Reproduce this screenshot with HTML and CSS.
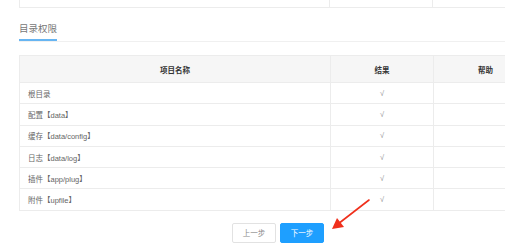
FILE: index.html
```html
<!DOCTYPE html>
<html lang="zh">
<head>
<meta charset="utf-8">
<link rel="stylesheet" href="styles.css">
</head>
<body>
<div class="viewport">
<div class="page">
  <div class="prev-table">
    <div class="pc c1"></div><div class="pc c2"></div><div class="pc c3"></div>
  </div>
  <div class="tabs">
    <span class="tab active">目录权限</span>
  </div>
  <table class="grid">
    <colgroup><col class="w1"><col class="w2"><col class="w3"></colgroup>
    <thead>
      <tr><th>项目名称</th><th>结果</th><th>帮助</th></tr>
    </thead>
    <tbody>
      <tr><td>根目录</td><td class="ok">√</td><td></td></tr>
      <tr><td>配置【data】</td><td class="ok">√</td><td></td></tr>
      <tr><td>缓存【data/config】</td><td class="ok">√</td><td></td></tr>
      <tr><td>日志【data/log】</td><td class="ok">√</td><td></td></tr>
      <tr><td>插件【app/plug】</td><td class="ok">√</td><td></td></tr>
      <tr><td>附件【upfile】</td><td class="ok">√</td><td></td></tr>
    </tbody>
  </table>
  <div class="actions">
    <button class="btn btn-plain">上一步</button>
    <button class="btn btn-primary">下一步</button>
  </div>
</div>
</div>
<svg class="arrow" width="50" height="40" viewBox="0 0 50 40">
  <line x1="41" y1="3" x2="10" y2="27" stroke="#f0301c" stroke-width="1.6" stroke-linecap="round"/>
  <polygon points="4,32 9,21 16,30" fill="#f0301c"/>
</svg>
</body>
</html>
```
FILE: styles.css
```css
html, body {
  margin: 0;
  padding: 0;
  background: #fff;
}
body {
  font-family: "Liberation Sans", "Noto Sans CJK SC", sans-serif;
  color: #666;
  position: relative;
  width: 505px;
  height: 252px;
  overflow: hidden;
}
.viewport {
  width: 505px;
  height: 252px;
  overflow: hidden;
}
.page {
  width: 518px;
  padding-left: 19px;
}
.prev-table {
  display: flex;
  height: 7px;
  border-bottom: 1px solid #ececec;
}
.pc { border-left: 1px solid #ececec; }
.c1 { width: 310px; }
.c2 { width: 102px; }
.c3 { width: 103px; border-right: 1px solid #ececec; }
.tabs {
  display: flex;
  margin-top: 15px;
  border-bottom: 1px solid #f0f0f0;
  height: 18px;
}
.tab {
  font-size: 9.5px;
  line-height: 12px;
  height: 16px;
  color: #777;
}
.tab.active {
  border-bottom: 2px solid #67b5f2;
}
.grid {
  margin-top: 13px;
  width: 518px;
  border-collapse: collapse;
  table-layout: fixed;
  font-size: 7.5px;
}
.w1 { width: 311px; }
.w2 { width: 103px; }
.w3 { width: 104px; }
.grid th, .grid td {
  border: 1px solid #ececec;
  padding: 0 8px;
}
.grid th {
  background: #f6f6f6;
  color: #333;
  font-weight: bold;
  height: 26px;
  text-align: center;
}
.grid td {
  height: 20.3px;
  color: #666;
}
.grid td.ok {
  text-align: center;
  color: #999;
}
.actions {
  display: flex;
  justify-content: center;
  gap: 4px;
  margin-top: 12px;
}
.btn {
  height: 20px;
  width: 44px;
  padding: 0;
  font-family: inherit;
  font-size: 7.5px;
  border-radius: 2px;
}
.btn-plain {
  background: #fff;
  border: 1px solid #e2e2e2;
  color: #888;
}
.btn-primary {
  background: #1e9fff;
  border: 1px solid #1e9fff;
  color: #fff;
}
.arrow {
  position: absolute;
  left: 328px;
  top: 197px;
}
```
